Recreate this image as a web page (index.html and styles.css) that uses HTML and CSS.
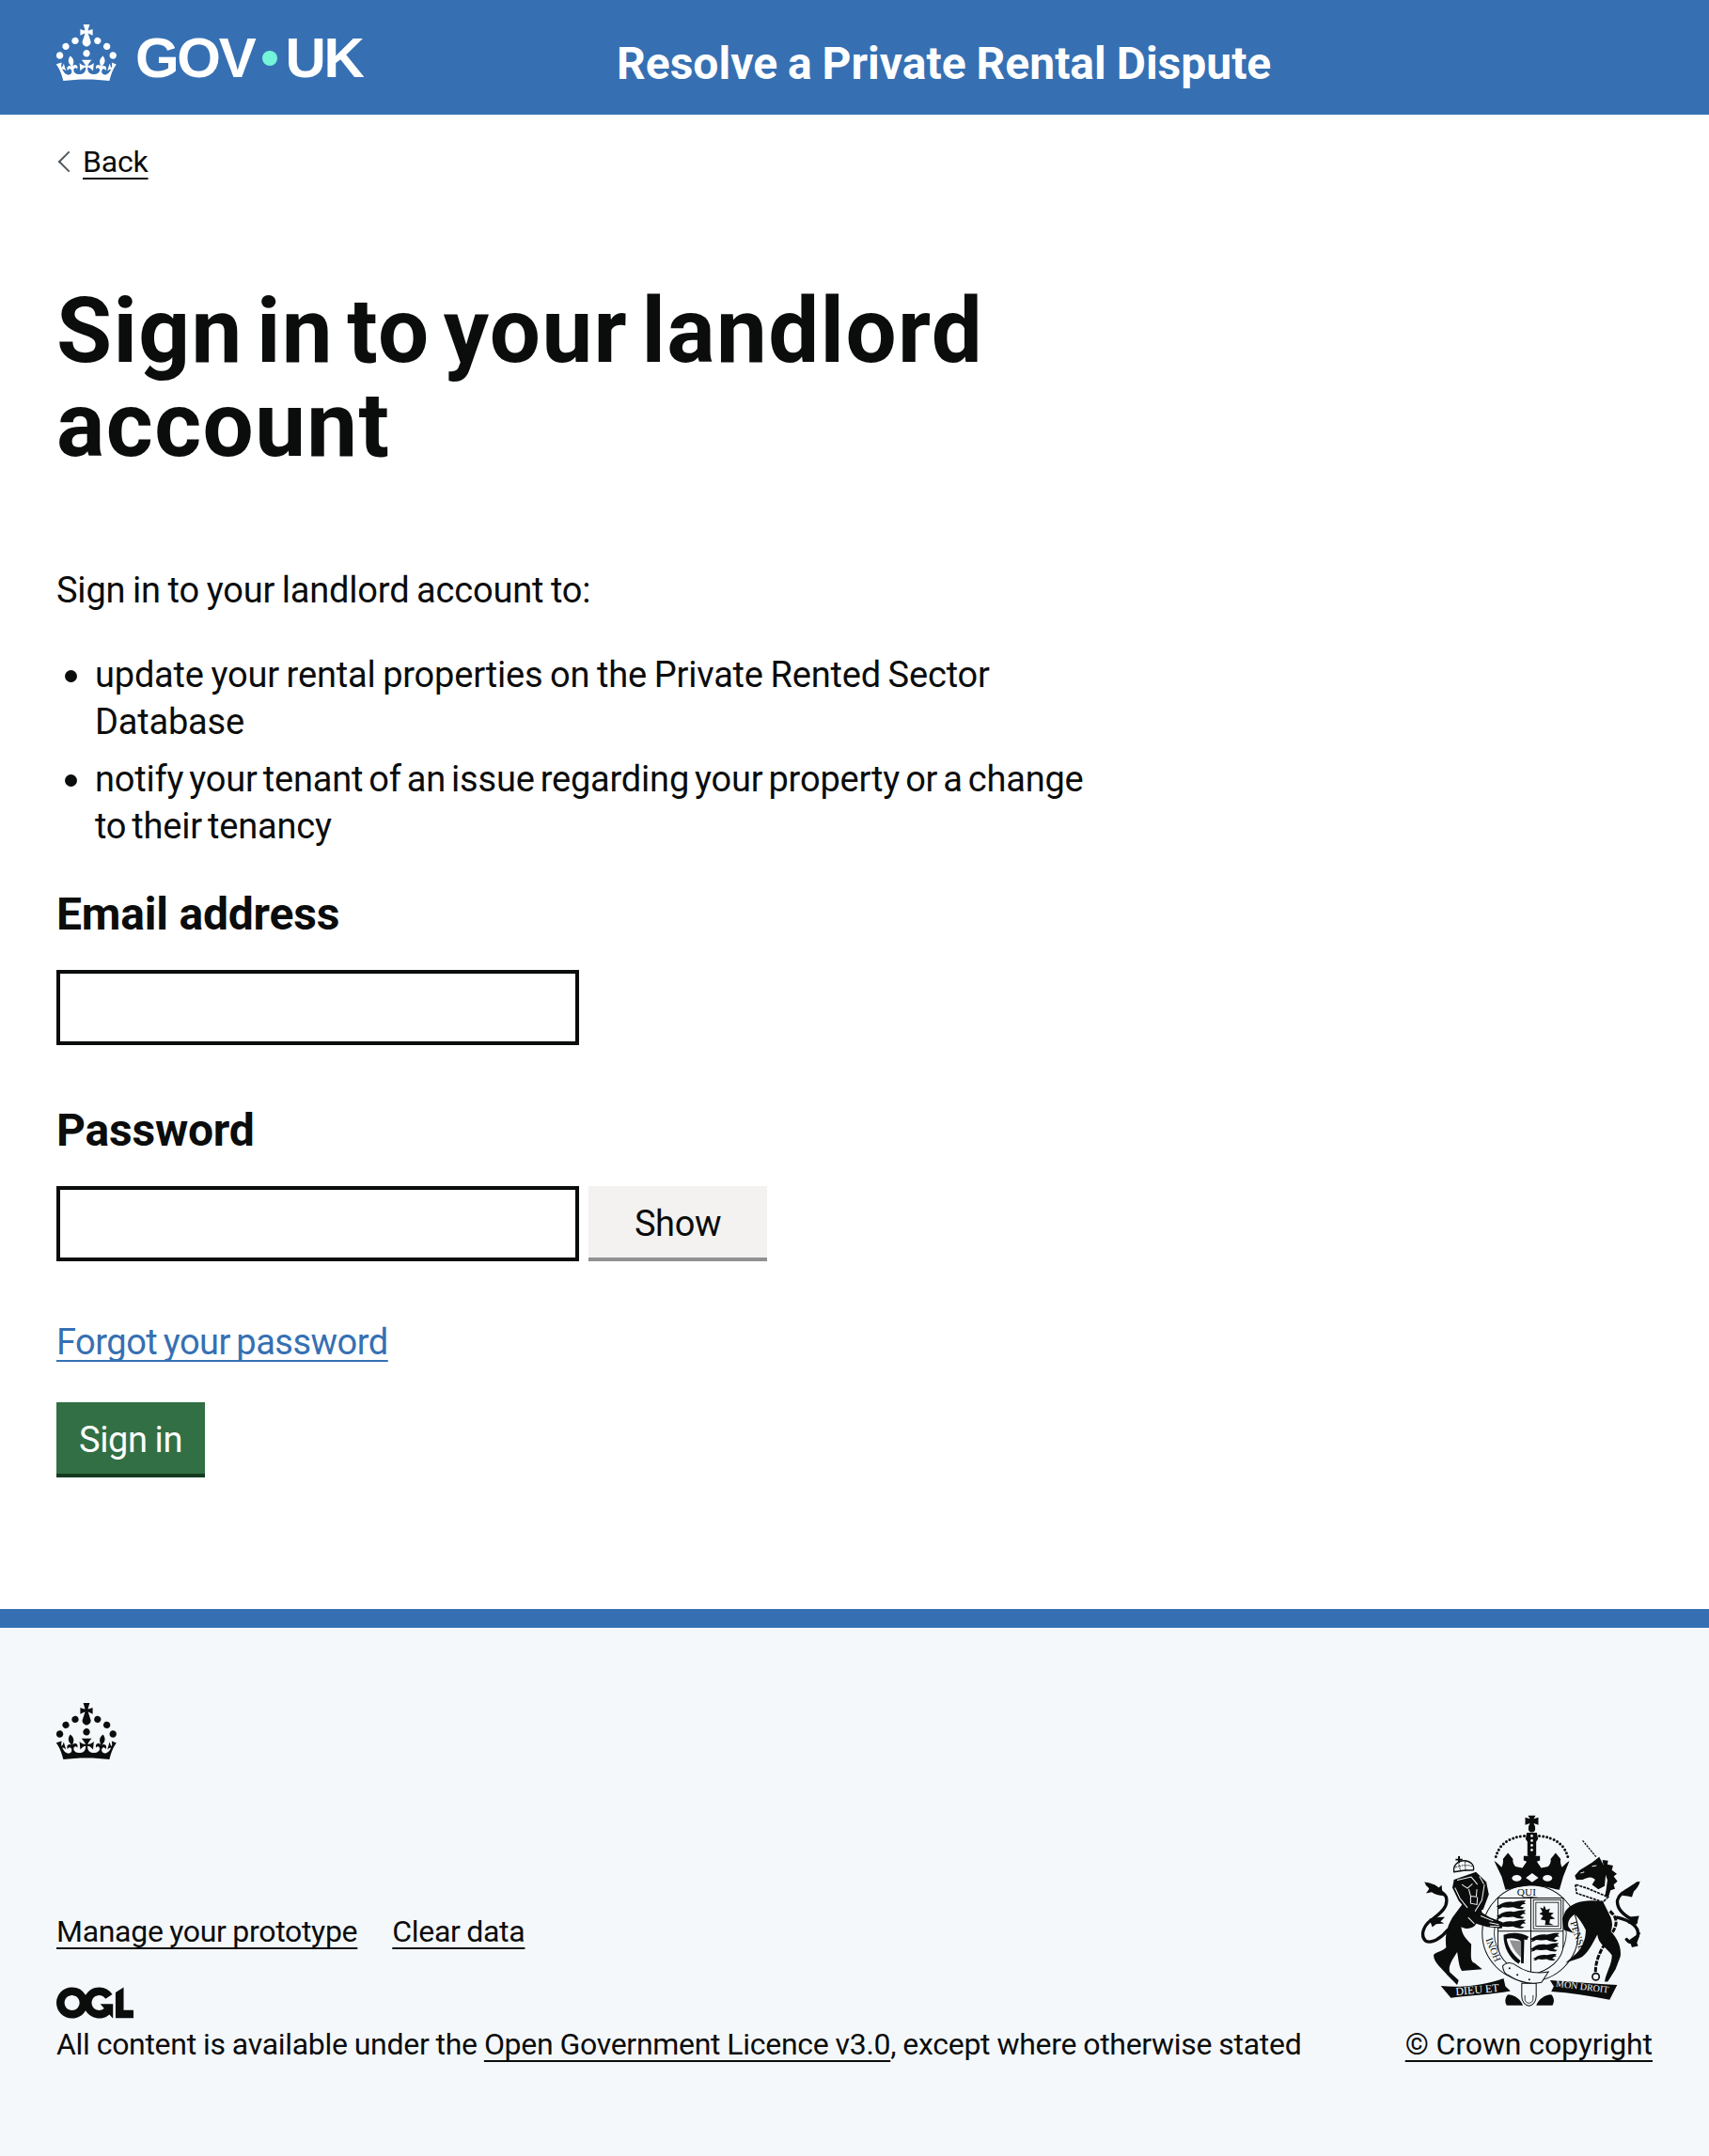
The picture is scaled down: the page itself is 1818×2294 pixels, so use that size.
FILE: index.html
```html
<!DOCTYPE html>
<html lang="en">
<head>
<meta charset="utf-8">
<title>Sign in to your landlord account</title>
<link rel="stylesheet" href="styles.css">
</head>
<body>
<svg class="defs" aria-hidden="true"><defs>
<path id="crown" d="M22.6 10.4c-1 .4-2-.1-2.4-1-.4-.9.1-2 1-2.4.9-.4 2 .1 2.4 1s-.1 2-1 2.4m-5.9 6.7c-.9.4-2-.1-2.4-1-.4-.9.1-2 1-2.4.9-.4 2 .1 2.4 1s-.1 2-1 2.4m10.8-3.7c-1 .4-2-.1-2.4-1-.4-.9.1-2 1-2.4.9-.4 2 .1 2.4 1s0 2-1 2.4m3.3 4.8c-1 .4-2-.1-2.4-1-.4-.9.1-2 1-2.4.9-.4 2 .1 2.4 1s-.1 2-1 2.4M17 4.7l2.3 1.2V2.5l-2.3.7-.2-.2.9-3h-3.4l.9 3-.2.2c-.1.1-2.3-.7-2.3-.7v3.4L15 4.7c.1.1.1.2.2.2l-1.3 4c-.1.2-.1.4-.1.6 0 1.1.8 2 1.9 2.2h.7c1-.2 1.9-1.1 1.9-2.2 0-.2 0-.4-.1-.6l-1.3-4c-.1 0-.1-.1 0-.2m-7.6 5.7c.9.4 2-.1 2.4-1 .4-.9-.1-2-1-2.4-.9-.4-2 .1-2.4 1s0 2 1 2.4m-5 3c.9.4 2-.1 2.4-1 .4-.9-.1-2-1-2.4-.9-.4-2 .1-2.4 1s.1 2 1 2.4m-3.2 4.8c.9.4 2-.1 2.4-1 .4-.9-.1-2-1-2.4-.9-.4-2 .1-2.4 1s0 2 1 2.4m14.8 11c4.4 0 8.6.3 12.3.8 1.1-4.5 2.4-7 3.7-8.8l-2.5-.9c.2 1.3.3 1.9 0 2.7-.4-.4-.8-1.1-1.1-2.3l-1.2 4c.7-.5 1.3-.8 2-.9-1.1 2.5-2.6 3.1-3.5 3-1.1-.2-1.7-1.2-1.5-2.1.3-1.2 1.5-1.5 2.1-.1 1.1-2.3-.8-3-2-2.3 1.9-1.9 2.1-3.5.6-5.6-2.1 1.6-2.1 3.2-1.2 5.5-1.2-1.4-3.2-.6-2.5 1.6.9-1.4 2.1-.5 1.9.8-.2 1.1-1.7 2.1-3.5 1.9-2.7-.2-2.9-2.1-2.9-3.6.7-.1 1.9.5 2.9 1.9l.4-4.3c-1.1 1.1-2.1 1.4-3.2 1.4.4-1.2 2.1-3 2.1-3h-5.4s1.7 1.9 2.1 3c-1.1 0-2.1-.2-3.2-1.4l.4 4.3c1-1.4 2.2-2 2.9-1.9-.1 1.5-.2 3.4-2.9 3.6-1.9.2-3.4-.8-3.5-1.9-.2-1.3 1-2.2 1.9-.8.7-2.3-1.2-3-2.5-1.6.9-2.2.9-3.9-1.2-5.5-1.5 2-1.3 3.7.6 5.6-1.2-.7-3.1 0-2 2.3.6-1.4 1.8-1.1 2.1.1.2.9-.3 1.9-1.5 2.1-.9.2-2.4-.5-3.5-3 .6 0 1.2.3 2 .9l-1.2-4c-.3 1.1-.7 1.9-1.1 2.3-.3-.8-.2-1.4 0-2.7l-2.9.9C1.3 23 2.6 25.5 3.7 30c3.7-.5 7.9-.8 12.3-.8"/>
<path id="leopard" d="M0 14c10-8 26-12 44-9l14-3c8-2 18-2 26-2l-6 6 6 5-10 1-8 7c6 2 10 3 14 3l-8 5c-10 0-20-2-28-6-12 2-24 2-34 0l-8 5-10 2 6-6-8-3z"/>
</defs></svg>

<header class="site-header">
  <a class="logo" href="#">
    <svg class="crown" viewBox="0 0 32 30" aria-hidden="true"><use href="#crown"/></svg>
    <span class="logo-text">GOV<span class="logo-dot"></span>UK</span>
  </a>
  <a class="service" href="#">Resolve a Private Rental Dispute</a>
</header>

<div class="page">
  <a class="back" href="#"><span class="chev"></span><span class="back-text">Back</span></a>
  <main class="content">
    <h1>Sign in to your landlord<br>account</h1>
    <p class="lead">Sign in to your landlord account to:</p>
    <ul>
      <li>update your rental properties on the Private Rented Sector<br>Database</li>
      <li>notify your tenant of an issue regarding your property or a change<br>to their tenancy</li>
    </ul>
    <label class="label" for="email">Email address</label>
    <input class="input" id="email" type="text">
    <label class="label label-pw" for="pw">Password</label>
    <div class="pw-row">
      <input class="input" id="pw" type="password">
      <button class="btn-show" type="button">Show</button>
    </div>
    <a class="forgot" href="#">Forgot your password</a>
    <button class="btn-signin" type="button">Sign in</button>
  </main>
</div>

<footer class="footer">
  <svg class="foot-crown" viewBox="0 0 32 30" aria-hidden="true"><use href="#crown"/></svg>
  <div class="foot-row">
    <div class="foot-left">
      <div class="foot-links"><a href="#">Manage your prototype</a><a href="#">Clear data</a></div>
      <svg class="ogl" viewBox="0 0 483.2 195.7" aria-hidden="true"><path d="M421.5 142.8V.1l-50.7 32.3v161.1h112.4v-50.7zm-122.3-9.6A47.12 47.12 0 0 1 221 97.8c0-26 21.1-47.1 47.1-47.1 16.7 0 31.4 8.7 39.7 21.8l42.7-27.2A97.63 97.63 0 0 0 268.1 0c-36.5 0-68.3 20.1-85.1 49.7A98 98 0 0 0 97.8 0C43.9 0 0 43.9 0 97.8s43.9 97.8 97.8 97.8c36.5 0 68.3-20.1 85.1-49.7a97.76 97.76 0 0 0 149.6 25.4l19.4 22.2h3v-87.8h-80l24.3 27.5zM97.8 145c-26 0-47.1-21.1-47.1-47.1s21.1-47.1 47.1-47.1 47.2 21 47.2 47S123.8 145 97.8 145"/></svg>
      <p class="licence">All content is available under the <a href="#">Open Government Licence v3.0</a>, except where otherwise stated</p>
    </div>
    <div class="foot-right">
      <svg class="crest" viewBox="150 90 710 620" role="img" aria-label="Royal Coat of Arms">
        <!-- garter -->
        <circle class="ln3" cx="503" cy="470" r="153"/>
        <circle class="ln2" cx="503" cy="470" r="115"/>
        <text class="crest-t" font-size="34" transform="translate(461 351)">QUI</text>
        <text class="crest-t" font-size="32" transform="translate(410 556) rotate(-112)">HONI</text>
        <text class="crest-t" font-size="32" transform="translate(630 436) rotate(72)">PENSE</text>
        <!-- shield -->
        <path class="ln3" d="M400 358h208v150c0 46-44 82-104 96-58-14-104-50-104-96z"/>
        <path class="ln3" d="M505 358v244M400 464h208"/>
        <g class="ink">
          <use href="#leopard" transform="translate(405 366)"/>
          <use href="#leopard" transform="translate(405 397)"/>
          <use href="#leopard" transform="translate(405 428)"/>
          <use href="#leopard" transform="translate(512 470)"/>
          <use href="#leopard" transform="translate(512 502) scale(.98)"/>
          <use href="#leopard" transform="translate(520 536) scale(.8)"/>
          <path d="M534 388l10 4 4-10 6 14 12-4-4 12 16 2-10 8 14 10-16 2-2 12 14 6h-28l2-14-16-4 8-12-12-6 10-6z"/>
        </g>
        <rect class="ln2 none" x="513" y="364" width="88" height="92"/>
        <rect class="ln2 none" x="521" y="372" width="72" height="76"/>
        <!-- harp -->
        <path class="ink" d="M418 476c24-10 60-8 80 6l-6 10-8-2-2 76h-8l-2-72c-14-8-28-10-44-6 2 22 18 50 44 70l-6 10c-30-18-48-52-48-92z"/>
        <path class="hatch" d="M438 492l36 4v52c-16-14-30-34-36-56z"/>
        <!-- imperial crown -->
        <g class="ink">
          <path d="M496 95h24l-6 11 15-5v24l-15-5 5 12h-22l5-12-15 5v-24l15 5z"/>
          <circle cx="508" cy="137" r="11"/>
          <path d="M492 150h32l4 20-6 8v44h-28v-44l-6-8z"/>
          <path d="M388 240c10 6 16 14 24 20 4-8 6-18 4-26l16-20 16 20c-2 8 2 18 8 24l22 4 14-20-10-4v-14h14l-1-6h26l-1 6h14v14l-10 4 14 20 22-4c6-6 10-16 8-24l16-20 16 20c-2 8 0 18 4 26 8-6 14-14 24-20l-20 50-12 42c-28-6-60-14-86-14s-58 8-86 14l-12-42z"/>
        </g>
        <g class="paper">
          <ellipse cx="460" cy="295" rx="15" ry="10"/><ellipse cx="558" cy="295" rx="15" ry="10"/>
          <path d="M509 279l20 15-20 14-20-14z"/>
          <circle cx="508" cy="160" r="4"/><circle cx="508" cy="175" r="4"/><circle cx="508" cy="190" r="4"/><circle cx="508" cy="205" r="4"/>
        </g>
        <path class="dots" d="M484 160q-78 8-92 72M532 160q78 8 92 72"/>
        <!-- lion -->
        <g transform="translate(135 75)">
          <path class="ink" d="M165 285L120 345C105 370 95 400 100 440C85 455 65 455 60 465C60 490 90 510 105 530L135 560L140 545L112 520C105 500 120 480 135 455C140 480 140 500 150 515L215 510L190 490C175 485 180 460 180 430C165 415 150 400 148 375C165 385 190 380 195 365L230 375L278 380L280 360L240 345L215 330L205 300Z"/>
          <path class="tail" d="M105 385C85 410 55 430 35 420C18 405 25 375 50 355C85 330 108 310 100 280C92 260 65 258 40 240"/>
          <path class="ink" d="M30 232c18 2 36 8 46 18l10-8c0 14 2 24 8 34-22-2-36-8-40-12l-18 4 10-14zM46 350c18-4 32-6 50-6l-14 14 12 6-26 2-12 10z"/>
          <path class="ink" d="M125 225L195 200L228 232L236 272L218 320L178 336L140 292L120 250Z"/>
          <path class="wline" d="M135 226L180 216L200 240M150 240l18 12 16-14M172 255l6 22 18 2 2-24M178 278v22l20 4 2-24M128 250l16 34 24 30M222 240l-8 50-22 36M206 214l14 24"/>
          <path class="crownline" d="M125 200c-4-22 14-36 32-36s34 12 30 30c-20 0-42 2-62 6z"/>
          <path class="crownline2" d="M130 185q26-10 52-4M140 172l6 26M160 168l2 28"/>
          <path class="ink" d="M138 150h6v8h8v5h-8v8h-6v-8h-8v-5h8z"/>
          <path class="wline" d="M170 345l20 20M210 340l40 16M238 362l30 6M240 372l30 2"/>
        </g>
        <!-- unicorn -->
        <g transform="translate(495 75)">
          <path class="horn" d="M175 100L218 152"/>
          <path class="ink" d="M150 212L165 195L205 170L228 152L240 175L250 195L245 245L225 255L205 240L215 225C205 215 195 215 175 225L155 225Z"/>
          <path class="ink" d="M238 162l18 2-2 12 18 4-4 14 16 12-10 8 12 16-12 10 4 14-14 4-6 20-14 8 6-30 4-30-10-30z"/>
          <path class="wline" d="M205 182l14-2M180 200l-12 4"/>
          <path class="collar" d="M152 240L156 268L240 296L256 280L190 252Z"/>
          <path class="ink" d="M120 325C140 295 190 285 240 295L255 325C265 345 275 360 265 390C285 410 300 440 295 470L280 510L255 550L245 550C250 520 270 490 268 465C250 440 225 430 222 400C205 430 190 465 165 475L120 490L155 460C170 445 185 420 185 385C175 365 165 350 150 335C135 345 125 360 130 375L145 395L115 385L110 350Z"/>
          <path class="chain" d="M262 325C285 345 290 365 265 400C245 430 215 470 216 522"/>
          <circle class="ring" cx="217" cy="534" r="11"/>
          <path class="tail" d="M285 345C330 355 358 378 350 405C345 425 325 430 315 415M345 360C310 340 282 320 286 290C292 265 320 260 350 236"/>
          <path class="ink" d="M358 230c-4 14-10 24-20 32l-6 18c-12-2-22-6-32-4l20-24c12-10 24-18 38-22zM355 340l-36 4 10 12-10 8 28 4zM360 392l-12 34 4 10-20 4-8-24z"/>
        </g>
        <!-- motto -->
        <path class="ink" d="M218 638C280 645 360 636 418 614L424 640L440 655C380 665 310 670 250 676Z"/>
        <path class="ink" d="M566 620C640 624 710 632 780 635L756 682C690 670 630 660 570 656L578 640Z"/>
        <text class="crest-w" font-size="36" transform="translate(266 668) rotate(-5)">DIEU ET</text>
        <text class="crest-w" font-size="30" transform="translate(584 640) rotate(7)">MON DROIT</text>
        <path class="ink" d="M432 666c22 0 40 16 48 34h-52c-8-12-4-26 4-34zM570 666c-22 0-40 16-48 34h52c8-12 4-26-4-34z"/>
        <path class="ln3" d="M476 630h46v42c0 16-10 28-23 30-13-2-23-14-23-30z"/>
        <path class="ln2 none" d="M486 668v12a13 13 0 0 0 26 0v-12"/>
        <path class="ln3" d="M415 575c12-14 30-14 46 0 26 18 58 26 100 18l-22 34c-40 8-76-2-108-24-8-2-14-14-16-28z"/>
        <circle class="inkdot" cx="462" cy="603" r="3"/><circle class="inkdot" cx="500" cy="618" r="3"/><circle class="inkdot" cx="437" cy="582" r="3"/>
      </svg>
      <a class="copyright" href="#">© Crown copyright</a>
    </div>
  </div>
</footer>
</body>
</html>
```

FILE: styles.css
```css
* { box-sizing: border-box; }
html, body { margin: 0; padding: 0; }
body {
  background: #fff;
  color: #0b0c0c;
  font-family: Roboto, "Liberation Sans", sans-serif;
  font-size: 38px;
  line-height: 50px;
  letter-spacing: -0.2px;
  word-spacing: -2.5px;
  min-height: 2294px;
}
.defs { display: none; }
a { color: inherit; text-decoration-skip-ink: none; }

.site-header {
  background: #3670b3;
  color: #fff;
  height: 122px;
  display: flex;
  padding-left: 60px;
}
.site-header a { color: #fff; text-decoration: none; }
.logo { width: 596px; display: flex; align-items: flex-start; padding-top: 26px; }
.crown { width: 64px; height: 60px; fill: #fff; flex: none; }
.logo-text {
  margin-left: 20px;
  font-family: "Liberation Sans", sans-serif;
  font-weight: 700;
  font-size: 60px;
  letter-spacing: -2.3px;
  line-height: 72px;
  display: flex;
  align-items: center;
}
.logo-dot { width: 16px; height: 16px; border-radius: 50%; background: #74f5d9; margin: 0 8px 0 9px; }
.service {
  font-weight: 700;
  font-size: 48px;
  letter-spacing: 0;
  word-spacing: -1px;
  line-height: 54px;
  padding-top: 41px;
  white-space: nowrap;
}

.page { padding: 0 60px; }
.back { display: inline-flex; align-items: center; margin-top: 30px; font-size: 32px; line-height: 40px; text-decoration: none; }
.chev {
  width: 16px; height: 16px;
  border-left: 2px solid #505a5f;
  border-bottom: 2px solid #505a5f;
  transform: rotate(45deg);
  margin: 0 7px 0 5px;
}
.back-text { text-decoration: underline; text-decoration-thickness: 2px; text-underline-offset: 6px; }

.content { width: 1200px; }
h1 { font-size: 96px; line-height: 100px; font-weight: 700; margin: 110px 0 0; letter-spacing: 1.4px; word-spacing: -11px; }
.lead { margin: 101px 0 0; word-spacing: -1.5px; }
ul { margin: 40px 0 0; padding: 0 0 0 41px; list-style: none; }
li { position: relative; margin-bottom: 11px; white-space: nowrap; word-spacing: -1.5px; }
li:nth-child(2) { word-spacing: -3.2px; }
li::before {
  content: "";
  position: absolute;
  left: -32px;
  top: 20px;
  width: 13px;
  height: 13px;
  border-radius: 50%;
  background: #0b0c0c;
}
.label { display: block; font-weight: 700; font-size: 48px; line-height: 50px; margin-top: 44px; letter-spacing: -0.2px; word-spacing: 0; }
.label-pw { margin-top: 66px; }
.input {
  display: block;
  width: 556px;
  height: 80px;
  border: 4px solid #0b0c0c;
  border-radius: 0;
  background: #fff;
  margin-top: 34px;
  outline: none;
}
.pw-row { display: flex; align-items: flex-start; gap: 10px; }
.btn-show {
  margin-top: 34px;
  width: 190px;
  height: 80px;
  border: 0;
  border-bottom: 4px solid #929191;
  background: #f3f2f1;
  color: #0b0c0c;
  font: 38px/50px Roboto, sans-serif;
  letter-spacing: -0.4px;
  padding: 3px 0 0;
}
.forgot {
  display: block;
  width: max-content;
  margin-top: 61px;
  color: #3670b3;
  letter-spacing: -0.5px;
  text-decoration-thickness: 2px;
  text-underline-offset: 6px;
}
.btn-signin {
  display: block;
  margin-top: 39px;
  width: 158px;
  height: 80px;
  border: 0;
  border-bottom: 4px solid #143a20;
  background: #326f44;
  color: #fff;
  font: 38px/50px Roboto, sans-serif;
  letter-spacing: -0.4px;
  word-spacing: -1px;
  padding: 3px 0 0;
}

.footer {
  margin-top: 140px;
  background: #f4f8fb;
  border-top: 20px solid #3670b3;
  height: 583px;
  padding: 80px 60px 0;
  font-size: 32px;
  line-height: 40px;
  letter-spacing: -0.3px;
  word-spacing: -1px;
}
.foot-crown { display: block; width: 64px; height: 60px; fill: #0b0c0c; }
.foot-row { display: flex; justify-content: space-between; align-items: flex-end; margin-top: 58px; }
.foot-links { display: flex; gap: 37px; }
.foot-links a, .licence a, .copyright { text-decoration-thickness: 2px; text-underline-offset: 6px; }
.ogl { display: block; width: 82px; height: 34px; margin-top: 39px; fill: #0b0c0c; }
.licence { margin: 7px 0 0; white-space: nowrap; word-spacing: -0.5px; }
.foot-right { display: flex; flex-direction: column; align-items: center; }
.crest { width: 237px; height: 207px; margin: 0 0 18px 4px; }
.copyright { white-space: nowrap; letter-spacing: -0.1px; word-spacing: 0; }

.crest-t { font-family: "Liberation Serif", serif; fill: #0b0c0c; letter-spacing: 0; word-spacing: 0; }
.crest-w { font-family: "Liberation Serif", serif; fill: #f4f8fb; letter-spacing: 0; word-spacing: 0; }
.ink { fill: #0b0c0c; }
.inkdot { fill: #0b0c0c; }
.paper { fill: #f4f8fb; }
.ln3 { fill: #f4f8fb; stroke: #0b0c0c; stroke-width: 3; }
.ln2 { fill: #f4f8fb; stroke: #0b0c0c; stroke-width: 2.5; }
.ln2.none { fill: none; }
.hatch { fill: #8f9192; }
.dots { fill: none; stroke: #0b0c0c; stroke-width: 9; stroke-linecap: round; stroke-dasharray: 0 12; }
.tail { fill: none; stroke: #0b0c0c; stroke-width: 10; stroke-linecap: round; }
.wline { fill: none; stroke: #f4f8fb; stroke-width: 3; }
.crownline { fill: #f4f8fb; stroke: #0b0c0c; stroke-width: 4; }
.crownline2 { fill: none; stroke: #0b0c0c; stroke-width: 3; stroke-dasharray: 4 3; }
.horn { stroke: #0b0c0c; stroke-width: 4; stroke-dasharray: 7 3; }
.collar { fill: #f4f8fb; stroke: #0b0c0c; stroke-width: 5; stroke-dasharray: 9 3; }
.chain { fill: none; stroke: #0b0c0c; stroke-width: 9; stroke-dasharray: 16 4; }
.ring { fill: none; stroke: #0b0c0c; stroke-width: 5; }
```
